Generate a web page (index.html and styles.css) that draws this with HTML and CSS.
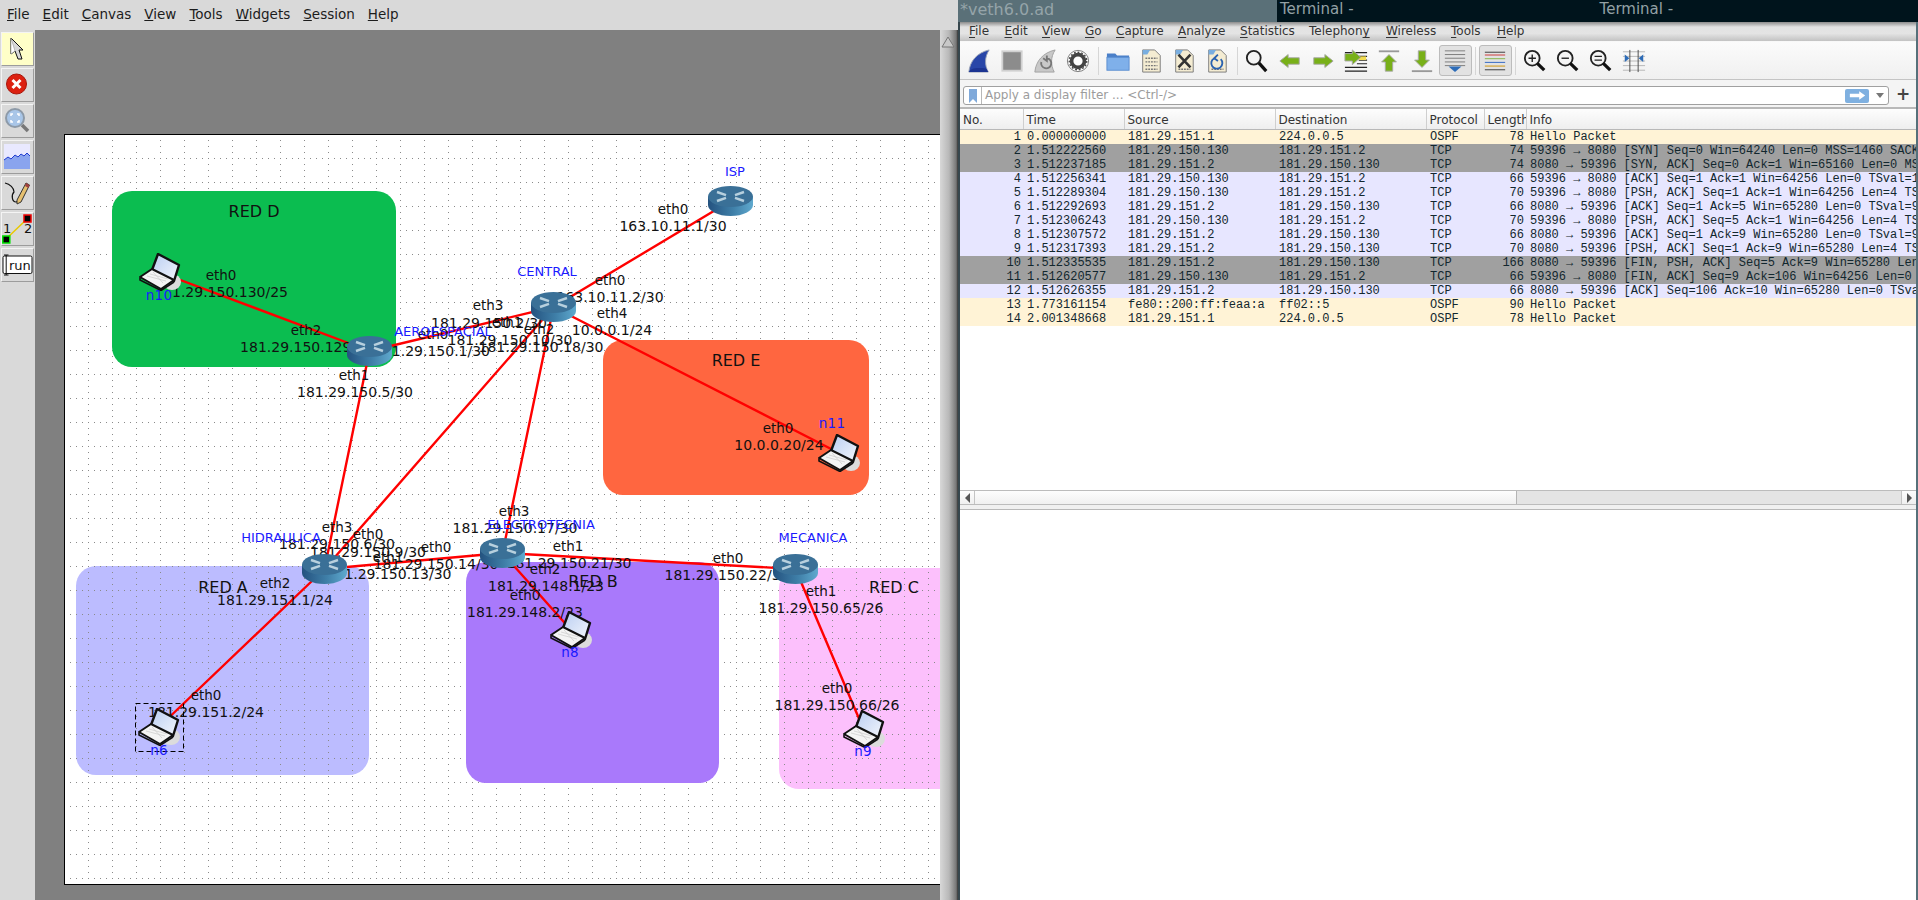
FILE: index.html
```html
<!DOCTYPE html>
<html lang="en">
<head>
<meta charset="utf-8">
<title>CORE and Wireshark</title>
<link rel="stylesheet" href="styles.css">
</head>
<body>
<div class="desktop">
  <section class="core">
    <nav class="core-menu">
      <span><u>F</u>ile</span><span><u>E</u>dit</span><span><u>C</u>anvas</span><span><u>V</u>iew</span><span><u>T</u>ools</span><span><u>W</u>idgets</span><span><u>S</u>ession</span><span><u>H</u>elp</span>
    </nav>
    <div class="core-body">
      <aside class="tools">
        <div class="tool tool-on"><svg class="tool-icon" viewBox="0 0 31 32"><path d="M9 5 L9 21 L13 18 L16 26 L20 26 L17 17 L21 17 Z" fill="#d8d8d8" stroke="#111" stroke-width="1"/><path d="M9 5 L9 21 L13 18 Z" fill="#fff" stroke="#888" stroke-width=".5"/></svg></div>
        <div class="tool"><svg class="tool-icon" viewBox="0 0 31 32"><circle cx="14.500" cy="15" r="10" fill="#dc2010" stroke="#a81408"/><path d="M10.500 11 L18.500 19 M18.500 11 L10.500 19" stroke="#fff" stroke-width="3"/></svg></div>
        <div class="tool"><svg class="tool-icon" viewBox="0 0 31 32"><path d="M20 20 L26 26" stroke="#777" stroke-width="3.500"/><circle cx="13" cy="13" r="9" fill="#a9c6e8" stroke="#8d9aa8" stroke-width="2"/><path d="M9 11 V9 H11 M15 9 H17 V11 M17 15 V17 H15 M11 17 H9 V15" fill="none" stroke="#fff" stroke-width="1.500"/></svg></div>
        <div class="tool"><svg class="tool-icon" viewBox="0 0 31 32"><rect x="2" y="3" width="26" height="25" fill="#e9e9ff"/><path d="M2 19 L6 16 L9 18 L13 14 L16 16 L19 13 L22 15 L25 12 L28 15 V28 H2 Z" fill="#8aa4ee" stroke="none"/><path d="M2 19 L6 16 L9 18 L13 14 L16 16 L19 13 L22 15 L25 12 L28 15" fill="none" stroke="#1f3bd0"/></svg></div>
        <div class="tool"><svg class="tool-icon" viewBox="0 0 31 32"><path d="M3 6 C8 7 12 11 12 15 C9 18 10 25 14 25 C16 25 17 24 18 23" fill="none" stroke="#111" stroke-width="1.200"/><path d="M15 23 L24 6 L27.500 8 L19 25 L15 27 Z" fill="#e6c070" stroke="#333"/><path d="M24 6 L27.500 8 L26.500 11 L23 9 Z" fill="#a04040"/></svg></div>
        <div class="tool"><svg class="tool-icon" viewBox="0 0 31 32"><path d="M4 26 L25 6" stroke="#e8c800" stroke-width="1.500"/><rect x=".8" y="23" width="7" height="7" fill="#000" stroke="#00e000" stroke-width="1.500"/><rect x="22" y="2" width="7" height="7" fill="#000" stroke="#f00000" stroke-width="1.500"/><text class="tool-num" x="1" y="20">1</text><text class="tool-num" x="22" y="20">2</text></svg></div>
        <div class="tool"><svg class="tool-icon" viewBox="0 0 31 32"><rect x="1" y="7" width="29" height="17.500" rx="1.500" fill="#fff" stroke="#111"/><path d="M2 6 H6.500 M4.200 6 V26 M2 26 H6.500" fill="none" stroke="#111"/><text class="tool-run" x="7" y="20.500">run</text></svg></div>
      </aside>
      <div class="canvas-wrap">
        <svg class="canvas" viewBox="35 30 906 870">
          <defs>
            <pattern id="grid" x="88" y="158" width="24" height="24" patternUnits="userSpaceOnUse">
              <path d="M0 .5 H24 M.5 0 V24" stroke="#8a8a8a" stroke-width="1" stroke-dasharray="1 5" fill="none"/>
            </pattern>
            <linearGradient id="rside" x1="0" x2="1" y1="0" y2="0">
              <stop offset="0" stop-color="#24527f"/><stop offset=".55" stop-color="#3f7fa8"/><stop offset="1" stop-color="#5fa9ce"/>
            </linearGradient>
            <linearGradient id="lscreen" x1="0" x2="1" y1="0" y2="1">
              <stop offset="0" stop-color="#b9cdf2"/><stop offset="1" stop-color="#f4f7fc"/>
            </linearGradient>
            <symbol id="router" viewBox="0 0 45 30" width="45" height="30">
              <path d="M0 10.500 V19 C0 25 10 30 22.500 30 C35 30 45 25 45 19 V10.500 Z" fill="url(#rside)"/>
              <ellipse cx="22.500" cy="10.500" rx="22.500" ry="10.500" fill="#3a7097"/>
              <path d="M9 6 L18 9.200 M36 6 L27 9.200 M9 15 L18 11.800 M36 15 L27 11.800" stroke="#b7d0de" stroke-width="2.400" fill="none"/>
            </symbol>
            <symbol id="laptop" viewBox="0 0 42 38" width="42" height="38">
              <ellipse cx="33" cy="29" rx="9" ry="8" fill="#dcdcdc"/>
              <path d="M19 1 L40 12 L35 28 L13 17 Z" fill="url(#lscreen)" stroke="#111" stroke-width="2.400" stroke-linejoin="round"/>
              <path d="M13 16 L1 24 L22 36 L35 27 Z" fill="#f4f4f4" stroke="#111" stroke-width="2" stroke-linejoin="round"/>
              <path d="M1 25 L1 27 L22 37.500 L35 29" fill="none" stroke="#111" stroke-width="1.600"/>
              <path d="M8 23 L27 28 M11 21 L29 26 M14 19 L24 30" stroke="#ccc" stroke-width=".7"/>
            </symbol>
          </defs>

          <rect class="sheet" x="64.500" y="134.500" width="890" height="750"/>
          <rect class="area-a" x="76" y="566" width="293" height="209" rx="20"/>
          <rect class="area-c" x="779" y="568" width="220" height="221" rx="20"/>
          <rect class="gridlayer" x="65" y="135" width="876" height="749"/>
          <rect class="area-d" x="112" y="191" width="284" height="176" rx="20"/>
          <rect class="area-e" x="603" y="340" width="266" height="155" rx="20"/>
          <rect class="area-b" x="466" y="562" width="253" height="221" rx="20"/>

          <path class="links" d="M159 272 L369.500 351 M730.500 201 L553.500 307 M553.500 307 L839 453 M553.500 307 L369.500 351 M553.500 307 L324.500 569 M553.500 307 L502.500 553 M369.500 351 L324.500 569 M324.500 569 L502.500 553 M502.500 553 L795.500 569 M502.500 553 L571 630 M795.500 569 L863 728 M324.500 569 L159 727"/>

          <text class="area-t" x="254" y="217">RED D</text>
          <text class="area-t" x="736" y="366">RED E</text>
          <text class="area-t" x="223" y="593">RED A</text>
          <text class="area-t" x="593" y="587">RED B</text>
          <text class="area-t" x="894" y="593">RED C</text>

          <text class="eth" x="221" y="280">eth0</text><text class="ip" x="230" y="297">1.29.150.130/25</text>
          <text class="eth" x="306" y="335">eth2</text><text class="ip" x="307" y="352">181.29.150.129/25</text>
          <text class="eth" x="354" y="380">eth1</text><text class="ip" x="355" y="397">181.29.150.5/30</text>
          <text class="eth" x="673" y="214">eth0</text><text class="ip" x="673" y="231">163.10.11.1/30</text>
          <text class="eth" x="610" y="285">eth0</text><text class="ip" x="610" y="302">163.10.11.2/30</text>
          <text class="eth" x="612" y="318">eth4</text><text class="ip" x="612" y="335">10.0.0.1/24</text>
          <text class="eth" x="488" y="310">eth3</text><text class="ip" x="489" y="328">181.29.150.2/30</text>
          <text class="eth" x="433" y="339">eth0</text><text class="ip" x="432" y="356">181.29.150.1/30</text>
          <text class="eth" x="507" y="327">eth1</text><text class="ip" x="510" y="345">181.29.150.10/30</text>
          <text class="eth" x="539" y="334">eth2</text><text class="ip" x="541" y="352">181.29.150.18/30</text>
          <text class="eth" x="337" y="532">eth3</text><text class="ip" x="337" y="549">181.29.150.6/30</text>
          <text class="eth" x="368" y="539">eth0</text><text class="ip" x="368" y="557">181.29.150.9/30</text>
          <text class="eth" x="388" y="562">eth1</text><text class="ip" x="389" y="579">181.29.150.13/30</text>
          <text class="eth" x="275" y="588">eth2</text><text class="ip" x="275" y="605">181.29.151.1/24</text>
          <text class="eth" x="514" y="516">eth3</text><text class="ip" x="515" y="533">181.29.150.17/30</text>
          <text class="eth" x="436" y="552">eth0</text><text class="ip" x="436" y="569">181.29.150.14/30</text>
          <text class="eth" x="568" y="551">eth1</text><text class="ip" x="569" y="568">181.29.150.21/30</text>
          <text class="eth" x="545" y="574">eth2</text><text class="ip" x="546" y="591">181.29.148.1/23</text>
          <text class="eth" x="525" y="600">eth0</text><text class="ip" x="525" y="617">181.29.148.2/23</text>
          <text class="eth" x="728" y="563">eth0</text><text class="ip" x="727" y="580">181.29.150.22/30</text>
          <text class="eth" x="821" y="596">eth1</text><text class="ip" x="821" y="613">181.29.150.65/26</text>
          <text class="eth" x="837" y="693">eth0</text><text class="ip" x="837" y="710">181.29.150.66/26</text>
          <text class="eth" x="778" y="433">eth0</text><text class="ip" x="779" y="450">10.0.0.20/24</text>
          <text class="eth" x="206" y="700">eth0</text><text class="ip" x="206" y="717">181.29.151.2/24</text>

          <use href="#router" x="708" y="186"/>
          <use href="#router" x="531" y="292"/>
          <use href="#router" x="347" y="336"/>
          <use href="#router" x="302" y="554"/>
          <use href="#router" x="480" y="538"/>
          <use href="#router" x="773" y="554"/>
          <use href="#laptop" x="139" y="253"/>
          <use href="#laptop" x="138" y="708"/>
          <use href="#laptop" x="550" y="611"/>
          <use href="#laptop" x="843" y="710"/>
          <use href="#laptop" x="818" y="434"/>

          <rect class="select" x="135.500" y="703.500" width="48" height="48"/>

          <text class="name" x="735" y="176">ISP</text>
          <text class="name" x="547" y="276">CENTRAL</text>
          <text class="name" x="443" y="336">AEROESPACIAL</text>
          <text class="name" x="281" y="542">HIDRAULICA</text>
          <text class="name" x="541" y="529">ELECTROTECNIA</text>
          <text class="name" x="813" y="542">MECANICA</text>
          <text class="name-n" x="159" y="300">n10</text>
          <text class="name-n" x="159" y="755">n6</text>
          <text class="name-n" x="570" y="657">n8</text>
          <text class="name-n" x="863" y="756">n9</text>
          <text class="name-n" x="832" y="428">n11</text>
        </svg>
      </div>
      <div class="vscroll"><svg class="vscroll-arrow" viewBox="0 0 16 12"><path d="M8 1 L14 11 H2 Z" fill="#c8c8c8" stroke="#777"/></svg></div>
    </div>
  </section>

  <section class="ws">
    <header class="titles">
      <div class="title-active">*veth6.0.ad</div>
      <div class="title-other"><span class="term-a">Terminal -</span><span class="term-b">Terminal -</span></div>
    </header>
    <div class="ws-main">
      <nav class="ws-menu">
        <span class="m1"><u>F</u>ile</span><span class="m2"><u>E</u>dit</span><span class="m3"><u>V</u>iew</span><span class="m4"><u>G</u>o</span><span class="m5"><u>C</u>apture</span><span class="m6"><u>A</u>nalyze</span><span class="m7"><u>S</u>tatistics</span><span class="m8">Telephon<u>y</u></span><span class="m9"><u>W</u>ireless</span><span class="m10"><u>T</u>ools</span><span class="m11"><u>H</u>elp</span>
      </nav>
      <div class="ws-tools">
        <div class="slot"><svg class="ico" viewBox="0 0 26 26"><path d="M2 25 C3 13 11 4 24 1 C19 9 19 17 23 25 Z" fill="#2846a8" stroke="#9aa3b5"/><path d="M2 25 C4 21 8 20 21 21 L23 25 Z" fill="#1c3492"/></svg></div>
        <div class="slot"><svg class="ico" viewBox="0 0 26 26"><rect x="2.500" y="2.500" width="21" height="21" fill="#8c8c8c" stroke="#d0d0d0" stroke-width="2"/></svg></div>
        <div class="slot"><svg class="ico" viewBox="0 0 26 26"><path d="M2 25 C3 13 11 4 24 1 C19 9 19 17 23 25 Z" fill="#c8c8c8" stroke="#a0a0a0"/><path d="M9 14 A5.500 5.500 0 1 0 15 10 M15 7 V13 L11 10" fill="none" stroke="#777" stroke-width="2"/></svg></div>
        <div class="slot"><svg class="ico" viewBox="0 0 26 26"><circle cx="13" cy="13" r="11.500" fill="#fff" stroke="#777"/><circle cx="13" cy="13" r="7" fill="none" stroke="#444" stroke-width="4"/><circle cx="13" cy="13" r="9.500" fill="none" stroke="#444" stroke-width="1.500" stroke-dasharray="2 2"/></svg></div>
        <i class="sep"></i>
        <div class="slot"><svg class="ico" viewBox="0 0 26 26"><path d="M1 5 H10 L12 7 H25 V10 H1 Z" fill="#4a7fc8"/><rect x="1" y="9" width="24" height="14" fill="#7fb0ea" stroke="#5b8ed0"/></svg></div>
        <div class="slot"><svg class="ico" viewBox="0 0 26 26"><path d="M4 1 H17 L23 7 V25 H4 Z" fill="#f4ecd2" stroke="#777"/><path d="M4 1 H12 L9 6 H4 Z" fill="#79aee0"/><path d="M7 10 H20 M7 14 H20 M7 18 H20 M7 22 H20" stroke="#777" stroke-width="1.500" stroke-dasharray="2 1"/></svg></div>
        <div class="slot"><svg class="ico" viewBox="0 0 26 26"><path d="M4 1 H17 L23 7 V25 H4 Z" fill="#f4ecd2" stroke="#777"/><path d="M4 1 H12 L9 6 H4 Z" fill="#79aee0"/><path d="M7 22 H20" stroke="#777" stroke-width="1.500" stroke-dasharray="2 1"/><path d="M7 6 L20 20 M20 6 L7 20" stroke="#333" stroke-width="2.800"/></svg></div>
        <div class="slot"><svg class="ico" viewBox="0 0 26 26"><path d="M4 1 H17 L23 7 V25 H4 Z" fill="#f4ecd2" stroke="#777"/><path d="M4 1 H12 L9 6 H4 Z" fill="#79aee0"/><path d="M7 22 H20" stroke="#777" stroke-width="1.500" stroke-dasharray="2 1"/><path d="M10 10 A6 6 0 1 0 17 11 M14 6 L10 10 L14 13" fill="none" stroke="#2a62b0" stroke-width="2"/></svg></div>
        <i class="sep"></i>
        <div class="slot"><svg class="ico" viewBox="0 0 26 26"><circle cx="9.500" cy="9.500" r="7.500" fill="#f4f4f4" stroke="#222" stroke-width="2"/><path d="M15 15 L23 24" stroke="#111" stroke-width="3.500"/></svg></div>
        <div class="slot"><svg class="ico" viewBox="0 0 26 26"><path d="M2 13 L11 6 V9.500 H23 V16.500 H11 V20 Z" fill="#78b018" stroke="#a8a8a8"/></svg></div>
        <div class="slot"><svg class="ico" viewBox="0 0 26 26"><path d="M24 13 L15 6 V9.500 H3 V16.500 H15 V20 Z" fill="#78b018" stroke="#a8a8a8"/></svg></div>
        <div class="slot"><svg class="ico" viewBox="0 0 26 26"><path d="M1 4 H25 M14 8 H25 M16 12 H25 M14 16 H25 M1 20 H25 M1 24 H25" stroke="#222" stroke-width="1.300"/><rect x="16" y="8" width="8" height="4" fill="#f2dc50"/><path d="M18 9 L9 1 V5 H1 V13 H9 V17 Z" fill="#78b018" stroke="#a8a8a8"/></svg></div>
        <div class="slot"><svg class="ico" viewBox="0 0 26 26"><path d="M2 2.500 H24" stroke="#999" stroke-width="2"/><path d="M13 6 L21 14 H17 V24 H9 V14 H5 Z" fill="#78b018" stroke="#a8a8a8"/></svg></div>
        <div class="slot"><svg class="ico" viewBox="0 0 26 26"><path d="M2 24 H24" stroke="#999" stroke-width="2"/><path d="M13 20 L21 12 H17 V2 H9 V12 H5 Z" fill="#78b018" stroke="#a8a8a8"/></svg></div>
        <div class="slot pressed"><svg class="ico" viewBox="0 0 26 26"><path d="M2 2 H24 M2 6 H24 M2 10 H24 M2 14 H24 M2 18 H24" stroke="#777"/><path d="M6 19 H20 L13 25 Z" fill="#2d6cb8"/></svg></div>
        <i class="sep"></i>
        <div class="slot pressed"><svg class="ico" viewBox="0 0 26 26"><path d="M2 3.500 H24" stroke="#333"/><path d="M2 6.500 H24" stroke="#cc3030"/><path d="M2 10.500 H24" stroke="#80b040"/><path d="M2 14.500 H24" stroke="#2860c0"/><path d="M2 18.500 H24" stroke="#d09000"/><path d="M2 22.500 H24" stroke="#333"/></svg></div>
        <i class="sep"></i>
        <div class="slot"><svg class="ico" viewBox="0 0 26 26"><circle cx="10" cy="10" r="8" fill="#f4f4f4" stroke="#222" stroke-width="2"/><path d="M15.500 15.500 L23 23" stroke="#111" stroke-width="3.500"/><path d="M6 10 H14 M10 6 V14" stroke="#222" stroke-width="1.500"/></svg></div>
        <div class="slot"><svg class="ico" viewBox="0 0 26 26"><circle cx="10" cy="10" r="8" fill="#f4f4f4" stroke="#222" stroke-width="2"/><path d="M15.500 15.500 L23 23" stroke="#111" stroke-width="3.500"/><path d="M6 10 H14" stroke="#222" stroke-width="1.500"/></svg></div>
        <div class="slot"><svg class="ico" viewBox="0 0 26 26"><circle cx="10" cy="10" r="8" fill="#f4f4f4" stroke="#222" stroke-width="2"/><path d="M15.500 15.500 L23 23" stroke="#111" stroke-width="3.500"/><path d="M6 8 H14 M6 12 H14" stroke="#222" stroke-width="1.500"/></svg></div>
        <div class="slot"><svg class="ico" viewBox="0 0 26 26"><path d="M1 3 H25 M1 8 H25 M1 13 H25 M1 18 H25 M1 23 H25" stroke="#b4b4b4"/><path d="M8.500 1 V25 M17.500 1 V25" stroke="#444"/><path d="M3 6 L8 10 L3 14 Z M23 6 L18 10 L23 14 Z" fill="#2d6cb8"/></svg></div>
      </div>
      <div class="ws-filter">
        <div class="filter-box">
          <svg class="bookmark" viewBox="0 0 10 16"><path d="M1 1 H9 V15 L5 11 L1 15 Z" fill="#7fa9da"/></svg>
          <span class="filter-text">Apply a display filter ... &lt;Ctrl-/&gt;</span>
          <span class="filter-go"><svg class="go-arrow" viewBox="0 0 20 10"><path d="M1 3 H12 V0 L19 5 L12 10 V7 H1 Z" fill="#fff"/></svg></span>
          <svg class="filter-drop" viewBox="0 0 8 5"><path d="M0 0 H8 L4 5 Z" fill="#777"/></svg>
        </div>
        <span class="filter-plus">+</span>
      </div>
      <div class="packets">
        <table class="plist">
          <colgroup><col class="c-no"><col class="c-time"><col class="c-addr"><col class="c-addr"><col class="c-proto"><col class="c-len"><col class="c-info"></colgroup>
          <thead><tr><th>No.</th><th>Time</th><th>Source</th><th>Destination</th><th>Protocol</th><th>Length</th><th>Info</th></tr></thead>
          <tbody>
            <tr class="ospf"><td class="r">1</td><td>0.000000000</td><td>181.29.151.1</td><td>224.0.0.5</td><td>OSPF</td><td class="r">78</td><td>Hello Packet</td></tr>
            <tr class="flag"><td class="r">2</td><td>1.512222560</td><td>181.29.150.130</td><td>181.29.151.2</td><td>TCP</td><td class="r">74</td><td>59396 → 8080 [SYN] Seq=0 Win=64240 Len=0 MSS=1460 SACK_PERM</td></tr>
            <tr class="flag"><td class="r">3</td><td>1.512237185</td><td>181.29.151.2</td><td>181.29.150.130</td><td>TCP</td><td class="r">74</td><td>8080 → 59396 [SYN, ACK] Seq=0 Ack=1 Win=65160 Len=0 MSS=1460</td></tr>
            <tr class="tcp"><td class="r">4</td><td>1.512256341</td><td>181.29.150.130</td><td>181.29.151.2</td><td>TCP</td><td class="r">66</td><td>59396 → 8080 [ACK] Seq=1 Ack=1 Win=64256 Len=0 TSval=1</td></tr>
            <tr class="tcp"><td class="r">5</td><td>1.512289304</td><td>181.29.150.130</td><td>181.29.151.2</td><td>TCP</td><td class="r">70</td><td>59396 → 8080 [PSH, ACK] Seq=1 Ack=1 Win=64256 Len=4 TSval</td></tr>
            <tr class="tcp"><td class="r">6</td><td>1.512292693</td><td>181.29.151.2</td><td>181.29.150.130</td><td>TCP</td><td class="r">66</td><td>8080 → 59396 [ACK] Seq=1 Ack=5 Win=65280 Len=0 TSval=9</td></tr>
            <tr class="tcp"><td class="r">7</td><td>1.512306243</td><td>181.29.150.130</td><td>181.29.151.2</td><td>TCP</td><td class="r">70</td><td>59396 → 8080 [PSH, ACK] Seq=5 Ack=1 Win=64256 Len=4 TSval</td></tr>
            <tr class="tcp"><td class="r">8</td><td>1.512307572</td><td>181.29.151.2</td><td>181.29.150.130</td><td>TCP</td><td class="r">66</td><td>8080 → 59396 [ACK] Seq=1 Ack=9 Win=65280 Len=0 TSval=9</td></tr>
            <tr class="tcp"><td class="r">9</td><td>1.512317393</td><td>181.29.151.2</td><td>181.29.150.130</td><td>TCP</td><td class="r">70</td><td>8080 → 59396 [PSH, ACK] Seq=1 Ack=9 Win=65280 Len=4 TSval</td></tr>
            <tr class="flag"><td class="r">10</td><td>1.512335535</td><td>181.29.151.2</td><td>181.29.150.130</td><td>TCP</td><td class="r">166</td><td>8080 → 59396 [FIN, PSH, ACK] Seq=5 Ack=9 Win=65280 Len=4</td></tr>
            <tr class="flag"><td class="r">11</td><td>1.512620577</td><td>181.29.150.130</td><td>181.29.151.2</td><td>TCP</td><td class="r">66</td><td>59396 → 8080 [FIN, ACK] Seq=9 Ack=106 Win=64256 Len=0 TSval</td></tr>
            <tr class="tcp"><td class="r">12</td><td>1.512626355</td><td>181.29.151.2</td><td>181.29.150.130</td><td>TCP</td><td class="r">66</td><td>8080 → 59396 [ACK] Seq=106 Ack=10 Win=65280 Len=0 TSval</td></tr>
            <tr class="ospf"><td class="r">13</td><td>1.773161154</td><td>fe80::200:ff:feaa:a</td><td>ff02::5</td><td>OSPF</td><td class="r">90</td><td>Hello Packet</td></tr>
            <tr class="ospf"><td class="r">14</td><td>2.001348668</td><td>181.29.151.1</td><td>224.0.0.5</td><td>OSPF</td><td class="r">78</td><td>Hello Packet</td></tr>
          </tbody>
        </table>
      </div>
      <div class="hscroll">
        <span class="hbtn"><svg class="harrow" viewBox="0 0 6 12"><path d="M6 0 V12 L0 6 Z" fill="#555"/></svg></span>
        <span class="hthumb"></span>
        <span class="htrough"></span>
        <span class="hbtn"><svg class="harrow" viewBox="0 0 6 12"><path d="M0 0 V12 L6 6 Z" fill="#555"/></svg></span>
      </div>
      <div class="splitter"></div>
      <div class="details"></div>
    </div>
  </section>
</div>
</body>
</html>
```

FILE: styles.css
```css
* { box-sizing: border-box; }
html, body { margin: 0; height: 100%; }
body { overflow: hidden; background: #808080; font-family: "DejaVu Sans", sans-serif; }
.desktop { display: flex; width: 1918px; height: 900px; }

/* CORE window */
.core { width: 958px; display: flex; flex-direction: column; background: #d9d9d9; }
.core-menu { height: 30px; display: flex; gap: 13px; padding: 5px 0 0 7px; font-size: 13.5px; line-height: 18px; color: #1c1c1c; }
.core-body { flex: 1; display: flex; min-height: 0; }
.tools { width: 35px; padding: 2px 0 0 1px; display: flex; flex-direction: column; gap: 2px; background: #d9d9d9; }
.tool { width: 33px; height: 34px; border: 1px solid; border-color: #f4f4f4 #9c9c9c #9c9c9c #f4f4f4; background: #d9d9d9; }
.tool-on { background: #ffffc8; }
.tool-icon { display: block; width: 31px; height: 32px; }
.tool-num { font-size: 13px; fill: #111; }
.tool-run { font-size: 13px; fill: #111; }
.canvas-wrap { width: 905px; overflow: hidden; background: #808080; }
.canvas { display: block; width: 906px; height: 870px; font-family: "DejaVu Sans", sans-serif; }
.sheet { fill: #fff; stroke: #000; stroke-width: 1; }
.gridlayer { fill: url(#grid); }
.area-a { fill: #bcbcff; }
.area-b { fill: #a979fb; }
.area-c { fill: #fcc0fc; }
.area-d { fill: #0bbd50; }
.area-e { fill: #ff6640; }
.links { stroke: #f00; stroke-width: 2.4; fill: none; }
.area-t { font-size: 16px; text-anchor: middle; fill: #111; }
.eth { font-size: 13.5px; text-anchor: middle; fill: #111; }
.ip { font-size: 14px; text-anchor: middle; fill: #111; }
.name { font-size: 13px; text-anchor: middle; fill: #1a1aff; }
.name-n { font-size: 13.5px; letter-spacing: .3px; text-anchor: middle; fill: #1a1aff; }
.select { fill: none; stroke: #000; stroke-width: 1; stroke-dasharray: 5 3; }
.vscroll { width: 18px; background: linear-gradient(90deg, #d8d8d8, #b8b8b8 50%, #777 90%, #333); padding-top: 6px; }
.vscroll-arrow { display: block; width: 16px; height: 12px; }

/* Wireshark window */
.ws { flex: 1; min-width: 0; display: flex; flex-direction: column; }
.titles { height: 22px; display: flex; background: #00141c; flex: none; }
.title-active { width: 319px; background: #5a7078; color: #95a4a9; font-size: 16px; line-height: 19px; padding-left: 2px; }
.title-other { flex: 1; color: #93a1a5; font-size: 15px; line-height: 19px; display: flex; padding-left: 3px; }
.term-b { margin-left: 246px; }
.ws-main { flex: 1; min-height: 0; display: flex; flex-direction: column; background: #fff; border-left: 2px solid #37474e; border-right: 2px solid #56707a; }
.ws-menu { height: 19px; flex: none; display: flex; font-size: 12px; line-height: 19px; color: #333; background: linear-gradient(#8c8c8c 0, #e2e2e2 5px, #e4e4e4 60%, #c2c2c2 100%); padding-left: 9px; }
.ws-menu u { text-underline-offset: 2px; }
.m1 { width: 35.5px; } .m2 { width: 37.5px; } .m3 { width: 43px; } .m4 { width: 31px; } .m5 { width: 62px; } .m6 { width: 62px; }
.m7 { width: 69px; } .m8 { width: 77px; } .m9 { width: 65px; } .m10 { width: 46px; } .m11 { width: 40px; }
.ws-tools { height: 39px; flex: none; display: flex; align-items: center; padding-left: 2.5px; background: linear-gradient(#fbfbfb, #f0f0f0); border-top: 1px solid #f8f8f8; border-bottom: 1px solid #c4c4c4; }
.slot { width: 33px; height: 31px; display: flex; align-items: center; justify-content: center; flex: none; }
.pressed { background: #e2e2e2; border: 1px solid #bcbcbc; border-radius: 3px; }
.ico { display: block; width: 24px; height: 24px; }
.sep { width: 1px; height: 28px; margin: 0 3px; background: #d6d6d6; flex: none; }
.ws-filter { height: 29px; flex: none; display: flex; align-items: flex-start; background: #f4f4f4; border-bottom: 2px solid #b8b8b8; padding: 6px 0 0 3px; }
.filter-box { width: 926px; height: 19px; display: flex; align-items: center; background: #fff; border: 1px solid #a0a0a0; border-radius: 3px; padding-left: 4px; }
.bookmark { width: 10px; height: 16px; flex: none; }
.filter-text { flex: 1; margin-left: 3px; padding-left: 3px; border-left: 1px solid #b8b8b8; font-size: 12px; line-height: 17px; color: #9c9c9c; white-space: nowrap; }
.filter-go { width: 24px; height: 14px; background: #7fb0e0; border-radius: 2px; display: flex; align-items: center; justify-content: center; flex: none; }
.go-arrow { width: 17px; height: 9px; }
.filter-drop { width: 8px; height: 5px; margin: 0 4px 0 7px; flex: none; }
.filter-plus { margin-left: 7px; font-size: 17px; font-weight: bold; color: #444; line-height: 17px; }
.packets { height: 381px; flex: none; overflow: hidden; background: #fff; }
.plist { width: 956px; table-layout: fixed; border-collapse: collapse; font-family: "Liberation Mono", monospace; font-size: 12px; color: #12272e; }
.c-no { width: 63px; } .c-time { width: 101px; } .c-addr { width: 151px; } .c-proto { width: 58px; } .c-len { width: 42px; } .c-info { width: 390px; }
.plist th { height: 20px; padding: 2px 0 0 3px; font: normal 12px/18px "DejaVu Sans", sans-serif; color: #333; text-align: left; background: linear-gradient(#fdfdfd, #eeeeee); border-right: 1px solid #cfcfcf; border-bottom: 1px solid #b8b8b8; overflow: hidden; white-space: nowrap; }
.plist td { height: 14px; padding: 0 0 0 4px; line-height: 14px; white-space: nowrap; overflow: hidden; }
.plist td.r { text-align: right; padding: 0 2px 0 0; }
.ospf { background: #fff3d6; }
.flag { background: #a0a0a0; }
.tcp { background: #e7e6ff; }
.hscroll { height: 15px; flex: none; display: flex; border-top: 1px solid #bcbcbc; border-bottom: 1px solid #bcbcbc; background: #e4e4e4; }
.hbtn { width: 14px; flex: none; background: linear-gradient(#fdfdfd, #efefef); display: flex; align-items: center; justify-content: center; }
.harrow { width: 5px; height: 10px; }
.hthumb { width: 543px; flex: none; background: linear-gradient(#fdfdfd, #f0f0f0); border-left: 1px solid #c4c4c4; border-right: 1px solid #b4b4b4; }
.htrough { flex: 1; border-right: 1px solid #c4c4c4; }
.splitter { height: 5px; flex: none; background: #f0f0f0; border-bottom: 1px solid #b8b8b8; }
.details { flex: 1; background: #fff; }
```
